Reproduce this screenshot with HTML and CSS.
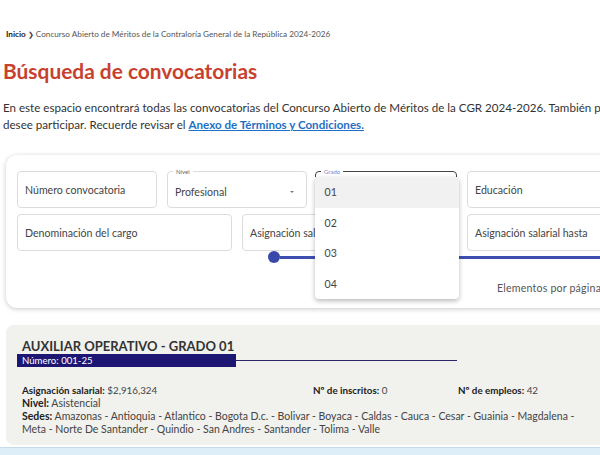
FILE: index.html
```html
<!DOCTYPE html>
<html lang="es">
<head>
<meta charset="utf-8">
<title>Búsqueda de convocatorias</title>
<link rel="stylesheet" href="styles.css">
</head>
<body>
<div class="page">
  <nav class="crumbs"><b>Inicio</b><span class="chev">&#x276F;</span><span>Concurso Abierto de Méritos de la Contraloría General de la República 2024-2026</span></nav>
  <h1 class="title">Búsqueda de convocatorias</h1>
  <p class="intro">En este espacio encontrará todas las convocatorias del Concurso Abierto de Méritos de la CGR 2024-2026. También podrá filtrar la convocatoria a la que<br>desee participar. Recuerde revisar el <a href="#" class="link">Anexo de Términos y Condiciones.</a></p>

  <section class="filters">
    <div class="row row1">
      <div class="field"><span class="ph">Número convocatoria</span></div>
      <div class="field labeled"><span class="flabel">Nivel</span><span class="val">Profesional</span><span class="caret"></span></div>
      <div class="field labeled focus"><span class="flabel">Grado</span>
        <ul class="menu">
          <li class="active">01</li>
          <li>02</li>
          <li>03</li>
          <li>04</li>
        </ul>
      </div>
      <div class="field"><span class="ph">Educación</span></div>
    </div>
    <div class="row row2">
      <div class="field"><span class="ph">Denominación del cargo</span></div>
      <div class="field"><span class="ph">Asignación salarial desde</span></div>
      <div class="field"><span class="ph">Asignación salarial hasta</span></div>
    </div>
    <div class="slider"><span class="thumb"></span><span class="track"></span></div>
    <div class="pager">Elementos por página</div>
  </section>

  <article class="result">
    <h2 class="rtitle">AUXILIAR OPERATIVO - GRADO 01</h2>
    <div class="numrow"><span class="num">Número: 001-25</span><span class="numline"></span></div>
    <div class="info">
      <div><b>Asignación salarial:</b> $2,916,324</div>
      <div><b>Nº de inscritos:</b> 0</div>
      <div><b>Nº de empleos:</b> 42</div>
    </div>
    <div class="line"><b>Nivel:</b> Asistencial</div>
    <div class="line sedes"><b>Sedes:</b> Amazonas - Antioquia - Atlantico - Bogota D.c. - Bolivar - Boyaca - Caldas - Cauca - Cesar - Guainia - Magdalena -<br>Meta - Norte De Santander - Quindio - San Andres - Santander - Tolima - Valle</div>
  </article>
  <div class="next"></div>
</div>
</body>
</html>
```
FILE: styles.css
```css
html, body {
  margin: 0;
  padding: 0;
  background: #ffffff;
  overflow: hidden;
}
body {
  font-family: Lato, "Open Sans", sans-serif;
  color: #333;
  width: 600px;
  height: 455px;
}
.page {
  width: 760px;
  padding: 0 0 0 3px;
}
.crumbs {
  padding: 29px 0 0 3px;
  font-size: 8.2px;
  line-height: 10px;
  color: #555;
  display: flex;
  align-items: center;
  white-space: nowrap;
}
.crumbs b { color: #222; }
.crumbs .chev {
  font-size: 7px;
  margin: 0 2px 0 2px;
  color: #333;
}
.title {
  margin: 20px 0 0 0;
  font-size: 20.9px;
  line-height: 24px;
  font-weight: 700;
  color: #c8412f;
}
.intro {
  margin: 16px 0 0 0;
  font-size: 11.6px;
  line-height: 17px;
  color: #333;
  white-space: nowrap;
}
.link {
  color: #1f6fc5;
  font-weight: 700;
  text-decoration: underline;
}
.filters {
  margin: 22px 0 0 3px;
  width: 740px;
  height: 153px;
  box-sizing: border-box;
  padding: 16px 11px 0 11px;
  background: #fff;
  border-radius: 11px;
  box-shadow: 0 1px 5px rgba(0,0,0,0.22);
}
.row {
  display: flex;
  gap: 10px;
}
.row2 { margin-top: 6px; }
.field {
  position: relative;
  height: 37px;
  box-sizing: border-box;
  border: 1px solid #dcdcdc;
  border-radius: 4px;
  display: flex;
  align-items: center;
  padding: 0 7px;
  font-size: 10.6px;
  color: #444;
  white-space: nowrap;
  overflow: visible;
}
.row1 .field { width: 140px; flex: none; }
.row2 .field { width: 215px; flex: none; overflow: hidden; }
.labeled .flabel {
  position: absolute;
  top: -4px;
  left: 5px;
  padding: 0 3px;
  background: #fff;
  font-size: 6px;
  line-height: 7px;
  color: #666;
}
.field .val { margin-top: 5px; }
.caret {
  position: absolute;
  right: 12px;
  top: 19px;
  width: 0;
  height: 0;
  border-left: 2px solid transparent;
  border-right: 2px solid transparent;
  border-top: 2px solid #777;
}
.focus { border: 1.5px solid #444; margin-left: -2px; width: 142px !important; }
.focus .flabel { color: #7986cb; }
.menu {
  position: absolute;
  left: -1.5px;
  top: 5px;
  width: 144px;
  margin: 0;
  padding: 0;
  list-style: none;
  background: #fff;
  border-radius: 4px;
  box-shadow: 0 2px 5px rgba(0,0,0,0.28);
  z-index: 5;
}
.menu li {
  height: 30.5px;
  line-height: 30px;
  padding-left: 10px;
  font-size: 10.6px;
  color: #444;
}
.menu li.active { background: #f1f1f1; }
.slider {
  position: relative;
  height: 12px;
  margin: 0 0 0 251px;
  display: flex;
  align-items: center;
}
.thumb {
  width: 12px;
  height: 12px;
  border-radius: 50%;
  background: #3949ab;
  flex: none;
}
.track {
  flex: 1;
  height: 3px;
  background: #3f4fb1;
}
.pager {
  margin: 19px 0 0 480px;
  font-size: 10.6px;
  color: #555;
  letter-spacing: 0.2px;
}
.result {
  margin: 17px 0 0 3px;
  width: 740px;
  height: 120px;
  box-sizing: border-box;
  padding: 13px 16px 0 16px;
  background: #f1f1ed;
  border-radius: 8px;
}
.rtitle {
  margin: 0;
  font-size: 13px;
  line-height: 16px;
  font-weight: 700;
  color: #333;
}
.numrow {
  display: flex;
  align-items: center;
  margin: 0 0 0 -5px;
}
.num {
  width: 214px;
  padding-left: 5px;
  background: #1d1673;
  color: #fff;
  font-size: 9.6px;
  line-height: 13px;
}
.numline {
  width: 221px;
  height: 1.5px;
  background: #2b2668;
}
.info {
  display: grid;
  grid-template-columns: 291px 145px auto;
  margin-top: 17px;
  font-size: 9.8px;
  line-height: 13px;
  color: #444;
}
.line {
  font-size: 10.5px;
  line-height: 13px;
  color: #444;
  white-space: nowrap;
}
.info b, .line b { color: #222; font-weight: 700; }
.next {
  margin-top: 2px;
  height: 20px;
  margin-left: -3px;
  background: #ddeef8;
  border-top: 1px solid #c7dbe8;
}
```
